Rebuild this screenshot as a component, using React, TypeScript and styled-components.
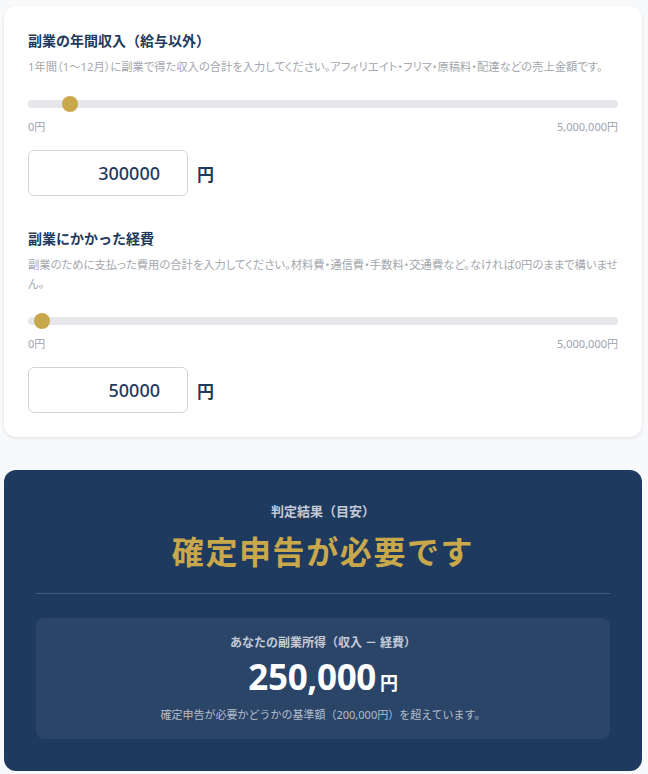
import { useState } from "react";
import styled, { createGlobalStyle } from "styled-components";

const MAX = 5000000;

const GlobalStyle = createGlobalStyle`
  * { box-sizing: border-box; }
  body {
    margin: 0;
    background: #f8f9fb;
    font-family: "Noto Sans", "Noto Sans CJK JP", sans-serif;
    color: #1e3a5f;
  }
`;

const Page = styled.div`
  padding: 6px 6px 8px 4px;
  display: flex;
  flex-direction: column;
  gap: 33px;
`;

const Card = styled.section`
  background: #ffffff;
  border-radius: 12px;
  box-shadow: 0 1px 3px rgba(15, 23, 42, 0.12);
  padding: 24px;
  display: flex;
  flex-direction: column;
  gap: 32px;
`;

const Field = styled.div`
  display: flex;
  flex-direction: column;
`;

const Label = styled.h3`
  margin: 0;
  font-size: 14px;
  font-weight: 700;
  line-height: 21px;
  color: #1e3a5f;
`;

const Help = styled.p`
  margin: 6px 0 0;
  font-size: 11.3px;
  line-height: 19px;
  color: #a3a7ae;
  font-feature-settings: "palt";
`;

const Range = styled.input.attrs({ type: "range" })`
  -webkit-appearance: none;
  appearance: none;
  width: 100%;
  height: 8px;
  margin: 24px 0 0;
  border-radius: 4px;
  background: #e5e7eb;
  outline: none;

  &::-webkit-slider-thumb {
    -webkit-appearance: none;
    width: 16px;
    height: 16px;
    border-radius: 50%;
    background: #c9a84c;
    border: none;
    cursor: pointer;
  }
`;

const Scale = styled.div`
  display: flex;
  justify-content: space-between;
  margin-top: 11px;
  font-size: 11px;
  line-height: 16px;
  color: #9ca3af;
`;

const AmountRow = styled.div`
  display: flex;
  align-items: center;
  gap: 9px;
  margin-top: 15px;
`;

const AmountInput = styled.input`
  width: 160px;
  height: 46px;
  border: 1px solid #d1d5db;
  border-radius: 6px;
  padding: 0 27px 0 12px;
  text-align: right;
  font-family: inherit;
  font-size: 18px;
  font-weight: 500;
  color: #1e3a5f;
  background: #fff;
  outline: none;
`;

const Yen = styled.span`
  font-size: 17px;
  font-weight: 700;
  color: #1e3a5f;
`;

const Result = styled.section`
  background: #1e3a5f;
  border-radius: 12px;
  padding: 31px 32px 32px;
  display: flex;
  flex-direction: column;
  align-items: stretch;
  text-align: center;
`;

const ResultCaption = styled.div`
  font-size: 13px;
  font-weight: 700;
  line-height: 20px;
  color: #c3cbd7;
`;

const Verdict = styled.div`
  margin-top: 8px;
  font-size: 32px;
  font-weight: 700;
  line-height: 46px;
  letter-spacing: 0.05em;
  color: #c9a84c;
`;

const Divider = styled.hr`
  margin: 18px 0 24px;
  border: none;
  border-top: 1px solid rgba(255, 255, 255, 0.18);
`;

const IncomeBox = styled.div`
  background: rgba(255, 255, 255, 0.06);
  border-radius: 8px;
  padding: 16px 16px 15px;
`;

const IncomeLabel = styled.div`
  font-size: 12px;
  font-weight: 700;
  line-height: 18px;
  color: #c3cbd7;
`;

const IncomeValue = styled.div`
  margin-top: 2px;
  font-size: 35px;
  font-weight: 700;
  line-height: 46px;
  color: #ffffff;
  letter-spacing: -0.01em;
`;

const IncomeUnit = styled.span`
  margin-left: 4px;
  font-size: 18px;
`;

const Note = styled.div`
  margin-top: 0;
  font-size: 11px;
  line-height: 18px;
  color: #b4bdca;
`;

type AmountFieldProps = {
  label: string;
  help: string;
  value: number;
  onChange: (v: number) => void;
};

const AmountField = ({ label, help, value, onChange }: AmountFieldProps) => (
  <Field>
    <Label>{label}</Label>
    <Help>{help}</Help>
    <Range
      min={0}
      max={MAX}
      step={10000}
      value={value}
      onChange={(e) => onChange(Number(e.target.value))}
    />
    <Scale>
      <span>0円</span>
      <span>5,000,000円</span>
    </Scale>
    <AmountRow>
      <AmountInput
        inputMode="numeric"
        value={value}
        onChange={(e) => onChange(Number(e.target.value.replace(/\D/g, "")) || 0)}
      />
      <Yen>円</Yen>
    </AmountRow>
  </Field>
);

export default function App() {
  const [income, setIncome] = useState(300000);
  const [cost, setCost] = useState(50000);
  const profit = Math.max(0, income - cost);
  const needed = profit > 200000;

  return (
    <>
      <GlobalStyle />
      <Page>
        <Card>
          <AmountField
            label="副業の年間収入（給与以外）"
            help="1年間（1〜12月）に副業で得た収入の合計を入力してください。アフィリエイト・フリマ・原稿料・配達などの売上金額です。"
            value={income}
            onChange={setIncome}
          />
          <AmountField
            label="副業にかかった経費"
            help="副業のために支払った費用の合計を入力してください。材料費・通信費・手数料・交通費など。なければ0円のままで構いません。"
            value={cost}
            onChange={setCost}
          />
        </Card>

        <Result>
          <ResultCaption>判定結果（目安）</ResultCaption>
          <Verdict>{needed ? "確定申告が必要です" : "確定申告は不要です"}</Verdict>
          <Divider />
          <IncomeBox>
            <IncomeLabel>あなたの副業所得（収入 － 経費）</IncomeLabel>
            <IncomeValue>
              {profit.toLocaleString("ja-JP")}
              <IncomeUnit>円</IncomeUnit>
            </IncomeValue>
            <Note>
              確定申告が必要かどうかの基準額（200,000円）を
              {needed ? "超えています。" : "超えていません。"}
            </Note>
          </IncomeBox>
        </Result>
      </Page>
    </>
  );
}
